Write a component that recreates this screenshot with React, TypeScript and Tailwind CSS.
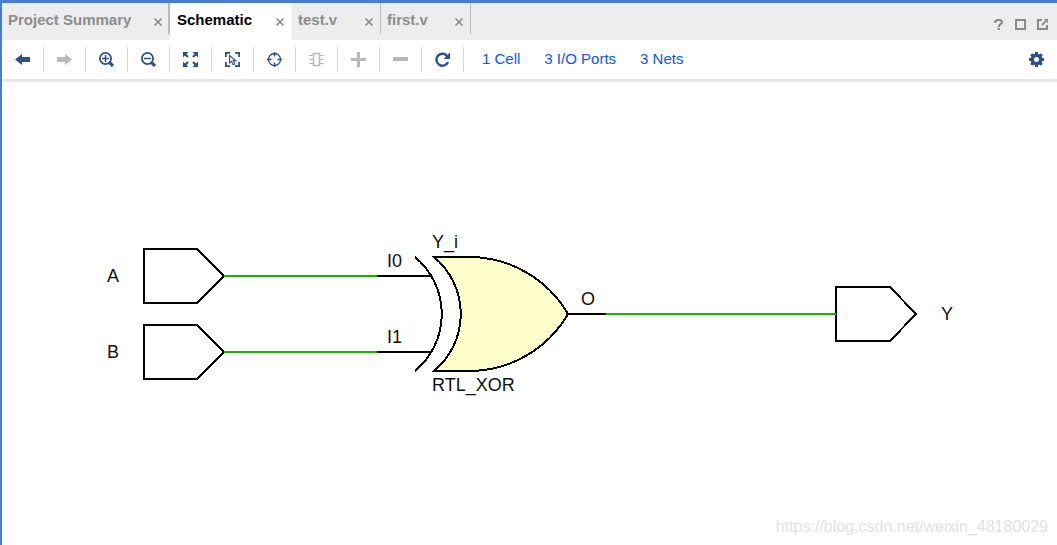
import type { ReactNode } from "react";

type Tab = { name: string; active?: boolean; frame: string; divider?: string };

const tabs: Tab[] = [
  { name: "Project Summary", frame: "w-[168px] pl-1.5", divider: "w-0.5" },
  { name: "Schematic", active: true, frame: "w-[122px] pl-[7px]" },
  { name: "test.v", frame: "w-[89px] pl-1.5", divider: "w-px" },
  { name: "first.v", frame: "w-[90px] pl-1.5", divider: "w-px" },
];

function Icon({ children, size = 15 }: { children: ReactNode; size?: number }) {
  return (
    <svg width={size} height={size} viewBox={`0 0 ${size} ${size}`} fill="none" stroke="none" aria-hidden="true">
      {children}
    </svg>
  );
}

const tools: { label: string; disabled?: boolean; icon: ReactNode }[] = [
  { label: "Back", icon: <path fill="currentColor" d="M0 7.5 7 2v3h8v5H7v3z" /> },
  { label: "Forward", disabled: true, icon: <path fill="currentColor" d="M15 7.5 8 2v3H0v5h8v3z" /> },
  {
    label: "Zoom in",
    icon: (
      <g stroke="currentColor">
        <circle cx="6.5" cy="6.5" r="5.6" strokeWidth="1.8" />
        <path d="M6.5 3v7M3 6.5h7" strokeWidth="1.5" />
        <path d="m10.6 10.6 3.4 3.4" strokeWidth="3.2" />
      </g>
    ),
  },
  {
    label: "Zoom out",
    icon: (
      <g stroke="currentColor">
        <circle cx="6.5" cy="6.5" r="5.6" strokeWidth="1.8" />
        <path d="M3 6.5h7" strokeWidth="1.5" />
        <path d="m10.6 10.6 3.4 3.4" strokeWidth="3.2" />
      </g>
    ),
  },
  {
    label: "Zoom fit",
    icon: (
      <g>
        <path fill="currentColor" d="M0 0h5.5L0 5.5zM15 0v5.5L9.5 0zM0 15V9.500L5.500 15zM15 15H9.500L15 9.500z" />
        <path stroke="currentColor" strokeWidth="2.2" d="m1.5 1.500 3.500 3.500M13.500 1.500 10 5M1.500 13.500 5 10M13.500 13.500 10 10" />
      </g>
    ),
  },
  {
    label: "Select area",
    icon: (
      <g stroke="currentColor">
        <path strokeWidth="1.8" d="M.9 5V.9H5M10 .9h4.1V5M14.1 10v4.1H10M5 14.1H.9V10" />
        <path strokeWidth="1.1" d="M4.500 3.500v7.500l2-1.700 1.600 3.400 1.700-.8-1.600-3.300h2.600z" />
      </g>
    ),
  },
  {
    label: "Auto fit selection",
    icon: (
      <g stroke="currentColor">
        <circle cx="7.5" cy="7.5" r="6" strokeWidth="1.3" />
        <path strokeWidth="1.5" d="M7.5 0v4.500M7.500 10.500V15M0 7.500h4.500M10.500 7.500H15" />
      </g>
    ),
  },
  {
    label: "Expand cell",
    disabled: true,
    icon: (
      <g stroke="currentColor">
        <path strokeWidth="1.5" d="M4.500 1.500h6v12h-6z" />
        <path strokeWidth="1" d="M0 3.500h4M0 7.500h4M0 11.500h4M11 3.500h4M11 7.500h4M11 11.500h4" />
      </g>
    ),
  },
  { label: "Add", disabled: true, icon: <path fill="currentColor" d="M6 0h3v6h6v3H9v6H6V9H0V6h6z" /> },
  { label: "Remove", disabled: true, icon: <path fill="currentColor" d="M0 5h15v4H0z" /> },
  {
    label: "Regenerate",
    icon: (
      <g>
        <path stroke="currentColor" strokeWidth="2.4" d="M12.300 4.200A6 6 0 1 0 13 10" />
        <path fill="currentColor" d="M15 .5V7H8.500z" />
      </g>
    ),
  },
];

function TabItem({ tab }: { tab: Tab }) {
  return (
    <div
      className={`relative flex h-full shrink-0 items-start justify-between pr-2 ${tab.frame} ${
        tab.active ? "bg-white text-black" : "text-[#8c8c8c]"
      }`}
    >
      <button
        type="button"
        role="tab"
        aria-selected={!!tab.active}
        className="h-[33px] whitespace-nowrap text-[15px] leading-5 font-bold"
      >
        {tab.name}
      </button>
      <button type="button" aria-label={`Close ${tab.name}`} className="pt-[15px] text-[#858585]">
        <Icon size={8}>
          <path stroke="currentColor" strokeWidth="1.5" d="m.5.5 7 7M7.500.5l-7 7" />
        </Icon>
      </button>
      {tab.divider && <span className={`absolute top-0 right-0 h-[31px] bg-[#bdbdbd] ${tab.divider}`} />}
    </div>
  );
}

function Schematic() {
  return (
    <svg
      viewBox="2 82 1055 463"
      className="block h-auto w-full"
      role="img"
      aria-label="Schematic"
      fontFamily="'Liberation Sans', Arial, sans-serif"
      fontSize="18"
    >
      <g fill="none" stroke="#000" strokeWidth="2" shapeRendering="crispEdges">
        <path d="M144 249h53l27 27-27 27h-53z" />
        <path d="M144 325h53l27 27-27 27h-53z" />
        <path d="M836 287h54l26 27-26 27h-54z" />
        <path d="M377 276h54M377 352h54M569 314h37" />
        <path d="M415 257A74 74 0 0 1 415 371" />
        <path fill="#ffffcc" d="M434 257H470A114.500 114.500 0 0 1 568 314A114.500 114.500 0 0 1 470 371H434A74 74 0 0 0 434 257z" />
        <path stroke="#1db000" d="M224 276h153M224 352h153M606 314h230" />
      </g>
      <g fill="#111">
        <text x="107" y="282">A</text>
        <text x="107" y="358">B</text>
        <text x="387" y="267">I0</text>
        <text x="387" y="343">I1</text>
        <text x="432" y="248">Y_i</text>
        <text x="432" y="391">RTL_XOR</text>
        <text x="581" y="305">O</text>
        <text x="941" y="320">Y</text>
      </g>
    </svg>
  );
}

export default function App() {
  return (
    <div className="relative min-h-screen border-t-3 border-l-2 border-[#4a7dd0] bg-white font-['Liberation_Sans',Arial,sans-serif]">
      <header className="flex h-[37px] items-start bg-[#ededed]">
        <div role="tablist" className="flex h-full">
          {tabs.map((t) => (
            <TabItem key={t.name} tab={t} />
          ))}
        </div>
        <div className="ml-auto flex items-center gap-[11px] pt-4 pr-[9px] text-[#8a8a8a]">
          <button type="button" aria-label="Help">
            <Icon size={11}>
              <path stroke="currentColor" strokeWidth="2.2" d="M2 3.800C2 .2 9 .2 9 3.200 9 5.300 5.700 5 5.700 8" />
              <path fill="currentColor" d="M4.500 9H7v2H4.500z" />
            </Icon>
          </button>
          <button type="button" aria-label="Maximize">
            <Icon size={11}>
              <path stroke="currentColor" strokeWidth="2" d="M1 1h9v9H1z" />
            </Icon>
          </button>
          <button type="button" aria-label="Float">
            <Icon size={11}>
              <path stroke="currentColor" strokeWidth="2" d="M5 1H1v9h9V6" />
              <path stroke="currentColor" strokeWidth="1.8" d="M5 6l4-4" />
              <path fill="currentColor" d="M7 0h4v4z" />
            </Icon>
          </button>
        </div>
      </header>

      <div role="toolbar" aria-label="Schematic tools" className="flex h-[42px] items-center border-b-3 border-[#e8e8e8]">
        {tools.map((t) => (
          <button
            key={t.label}
            type="button"
            aria-label={t.label}
            disabled={t.disabled}
            className={`flex h-[25px] w-[42px] items-center justify-center border-r border-[#d6d6d6] ${
              t.disabled ? "text-[#b8b8b8]" : "text-[#2f5089]"
            }`}
          >
            <Icon>{t.icon}</Icon>
          </button>
        ))}
        <nav className="ml-[18px] flex gap-6 pb-0.5 text-[15px] leading-5 whitespace-nowrap text-[#0f55f0]">
          <a href="#cells">1 Cell</a>
          <a href="#ports">3 I/O Ports</a>
          <a href="#nets">3 Nets</a>
        </nav>
        <button type="button" aria-label="Settings" className="mr-[13px] ml-auto text-[#2f5089]">
          <Icon>
            <circle cx="7.5" cy="7.5" r="4.200" stroke="currentColor" strokeWidth="3.4" />
            <path
              stroke="currentColor"
              strokeWidth="3"
              d="M7.500 0v2.500M7.500 12.500V15M0 7.500h2.500M12.500 7.500H15M2.200 2.200 4 4M11 11l1.800 1.800M2.200 12.800 4 11M11 4l1.800-1.800"
            />
          </Icon>
        </button>
      </div>

      <main>
        <Schematic />
      </main>
      <div className="absolute right-[9px] bottom-2 text-base leading-5 text-[#e2e2e2]">
        https://blog.csdn.net/weixin_48180029
      </div>
    </div>
  );
}
